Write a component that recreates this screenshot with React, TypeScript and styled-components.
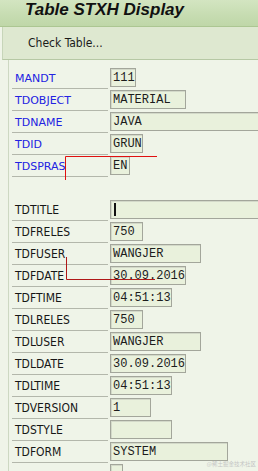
import styled, { createGlobalStyle } from 'styled-components';

const GlobalStyle = createGlobalStyle`
  html, body {
    margin: 0;
    padding: 0;
    background: #eff4e8;
    overflow: hidden;
  }
`;

const Screen = styled.div`
  position: relative;
  width: 258px;
  height: 471px;
  overflow: hidden;
  background: #eff4e8;
`;

const TitleBar = styled.div`
  height: 26px;
  padding-left: 25px;
  background: linear-gradient(180deg, #d3e5c1 0%, #c6dcb1 60%, #bfd7a8 100%);
  border-bottom: 1px solid #acc692;
  font-family: 'Liberation Sans', Arial, sans-serif;
  font-weight: bold;
  font-style: italic;
  font-size: 17px;
  line-height: 20px;
  color: #111;
`;

const Toolbar = styled.div`
  height: 32px;
  display: flex;
  align-items: center;
  padding-left: 25px;
  background: #dee8d0;
  border-bottom: 1px solid #b6c8a4;
  border-left: 1px solid #c7d5b9;
  margin-left: 2px;
  font-family: 'DejaVu Sans Condensed', 'DejaVu Sans', sans-serif;
  font-size: 12px;
  color: #1a1a1a;
`;

const Content = styled.div`
  margin-left: 8px;
  border-left: 1px solid #cdd8c2;
  padding-top: 7px;
  min-height: 420px;
`;

const Row = styled.div`
  display: flex;
  align-items: flex-end;
  height: 22px;
`;

const Label = styled.div<{ $blue?: boolean; $plain?: boolean }>`
  box-sizing: border-box;
  flex: none;
  width: 96px;
  height: 22px;
  margin-left: 3px;
  margin-right: 2px;
  padding-left: 3px;
  padding-top: 1px;
  display: flex;
  align-items: center;
  border-bottom: 1px solid ${(p) => (p.$plain ? 'transparent' : '#b3b7ab')};
  font-family: ${(p) =>
    p.$blue ? "'DejaVu Sans', sans-serif" : "'DejaVu Sans Condensed', 'DejaVu Sans', sans-serif"};
  font-size: ${(p) => (p.$blue ? '11px' : '12px')};
  color: ${(p) => (p.$blue ? '#2222e2' : '#161616')};
  white-space: nowrap;
`;

const Field = styled.div<{ $w: number }>`
  box-sizing: border-box;
  flex: none;
  width: ${(p) => p.$w}px;
  height: 19px;
  margin-bottom: 2px;
  padding-left: 2px;
  display: flex;
  align-items: center;
  background: #e9f1dc;
  border: 1px solid #a3a69b;
  box-shadow: inset 1px 1px 0 #d3d9c9;
  font-family: 'Liberation Mono', 'Courier New', monospace;
  font-size: 12px;
  color: #1c1c1c;
  white-space: pre;
`;

const Caret = styled.span`
  display: inline-block;
  width: 2px;
  height: 13px;
  margin-left: 1px;
  background: #111;
`;

const Marks = styled.svg`
  position: absolute;
  left: 0;
  top: 0;
  pointer-events: none;
`;

const Watermark = styled.div`
  position: absolute;
  right: 2px;
  bottom: 3px;
  font-family: 'Noto Sans CJK SC', sans-serif;
  font-size: 5.5px;
  color: #c4c4c4;
`;

type Item = { label: string; value?: string; w?: number; blue?: boolean; caret?: boolean; blank?: boolean };

const items: Item[] = [
  { label: 'MANDT', value: '111', w: 26, blue: true },
  { label: 'TDOBJECT', value: 'MATERIAL', w: 76, blue: true },
  { label: 'TDNAME', value: 'JAVA', w: 200, blue: true },
  { label: 'TDID', value: 'GRUN', w: 33, blue: true },
  { label: 'TDSPRAS', value: 'EN', w: 20, blue: true },
  { label: '', blank: true },
  { label: 'TDTITLE', value: '', w: 200, caret: true },
  { label: 'TDFRELES', value: '750', w: 33 },
  { label: 'TDFUSER', value: 'WANGJER', w: 91 },
  { label: 'TDFDATE', value: '30.09.2016', w: 76 },
  { label: 'TDFTIME', value: '04:51:13', w: 62 },
  { label: 'TDLRELES', value: '750', w: 33 },
  { label: 'TDLUSER', value: 'WANGJER', w: 91 },
  { label: 'TDLDATE', value: '30.09.2016', w: 76 },
  { label: 'TDLTIME', value: '04:51:13', w: 62 },
  { label: 'TDVERSION', value: '1', w: 41 },
  { label: 'TDSTYLE', value: '', w: 62 },
  { label: 'TDFORM', value: 'SYSTEM', w: 118 },
  { label: '', value: '', w: 13 },
];

function App() {
  return (
    <Screen>
      <GlobalStyle />
      <TitleBar>Table STXH Display</TitleBar>
      <Toolbar>Check Table...</Toolbar>
      <Content>
        {items.map((it, i) => (
          <Row key={i}>
            <Label $blue={it.blue} $plain={it.blank}>{it.label}</Label>
            {!it.blank && (
              <Field $w={it.w ?? 20}>
                {it.caret ? <Caret /> : it.value}
              </Field>
            )}
          </Row>
        ))}
      </Content>
      <Marks width="258" height="471">
        <polyline points="65.5,180 65.5,156.5 157,156.5" fill="none" stroke="#e01010" strokeWidth="1" />
        <polyline points="66.5,257 66.5,279.5 155,279.5" fill="none" stroke="#b01818" strokeWidth="1" />
      </Marks>
      <Watermark>@稀土掘金技术社区</Watermark>
    </Screen>
  );
}

export default App;
